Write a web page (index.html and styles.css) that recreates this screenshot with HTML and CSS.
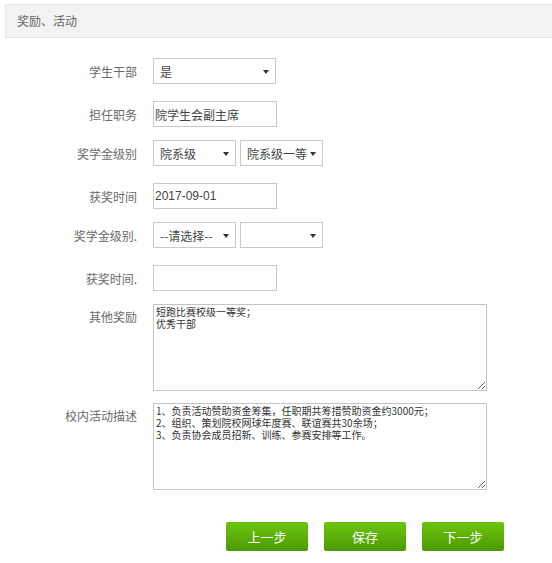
FILE: index.html
```html
<!DOCTYPE html>
<html lang="zh-CN">

<head>
    <meta charset="UTF-8">
    <meta name="viewport" content="width=device-width, initial-scale=1.0">
    <title>奖励、活动</title>
    <link rel="stylesheet" href="styles.css">
</head>

<body>

    <div class="panel-head">奖励、活动</div>

    <form class="award-form">
        <div class="row row-select">
            <label class="row-label">学生干部</label>
            <div class="select-wrap w-long">
                <select>
                    <option>是</option>
                    <option>否</option>
                </select>
            </div>
        </div>

        <div class="row">
            <label class="row-label">担任职务</label>
            <input type="text" class="text-input" value="院学生会副主席">
        </div>

        <div class="row row-select">
            <label class="row-label">奖学金级别</label>
            <div class="select-group">
                <div class="select-wrap w-short">
                    <select>
                        <option>院系级</option>
                    </select>
                </div>
                <div class="select-wrap w-short">
                    <select>
                        <option>院系级一等</option>
                    </select>
                </div>
            </div>
        </div>

        <div class="row">
            <label class="row-label">获奖时间</label>
            <input type="text" class="text-input" value="2017-09-01">
        </div>

        <div class="row row-select">
            <label class="row-label">奖学金级别.</label>
            <div class="select-group">
                <div class="select-wrap w-short">
                    <select>
                        <option>--请选择--</option>
                    </select>
                </div>
                <div class="select-wrap w-short">
                    <select>
                        <option></option>
                    </select>
                </div>
            </div>
        </div>

        <div class="row">
            <label class="row-label">获奖时间.</label>
            <input type="text" class="text-input" value="">
        </div>

        <div class="row row-area">
            <label class="row-label">其他奖励</label>
            <textarea class="text-area">短跑比赛校级一等奖；
优秀干部</textarea>
        </div>

        <div class="row row-area">
            <label class="row-label">校内活动描述</label>
            <textarea class="text-area">1、负责活动赞助资金筹集，任职期共筹措赞助资金约3000元；
2、组织、策划院校网球年度赛、联谊赛共30余场；
3、负责协会成员招新、训练、参赛安排等工作。</textarea>
        </div>

        <div class="actions">
            <button type="button" class="green-btn">上一步</button>
            <button type="button" class="green-btn">保存</button>
            <button type="button" class="green-btn">下一步</button>
        </div>
    </form>

</body>

</html>
```

FILE: styles.css
```css
body {
    margin: 0;
    font-family: "Noto Sans CJK SC", "Liberation Sans", sans-serif;
    font-size: 12px;
    color: #333;
    background: #fff;
}

.panel-head {
    margin: 4px 0 0 5px;
    height: 32px;
    line-height: 32px;
    padding-left: 11px;
    background: #f3f3f3;
    border: 1px solid #e6e6e6;
    border-right: none;
    color: #666;
    font-size: 12px;
}

.award-form {
    padding-top: 20px;
}

.row {
    display: grid;
    grid-template-columns: 137px auto;
    column-gap: 16px;
    align-items: center;
    margin-bottom: 13px;
}

.row-select {
    margin-bottom: 17px;
}

.row-area {
    align-items: start;
    margin-bottom: 12px;
}

.row-label {
    text-align: right;
    color: #6a6a6a;
    font-size: 12px;
}

.row-area .row-label {
    line-height: 26px;
}

.text-input {
    box-sizing: border-box;
    width: 124px;
    height: 26px;
    padding: 0 1px;
    border: 1px solid #c9c9c9;
    font-family: "Liberation Sans", "Noto Sans CJK SC", sans-serif;
    font-size: 12px;
    color: #444;
    outline: none;
}

.select-group {
    display: flex;
    gap: 4px;
}

.select-wrap {
    position: relative;
    box-sizing: border-box;
    height: 26px;
    border: 1px solid #c9c9c9;
    background: #fff;
}

.select-wrap::after {
    content: "";
    position: absolute;
    right: 6px;
    top: 11px;
    border-left: 3px solid transparent;
    border-right: 3px solid transparent;
    border-top: 4px solid #333;
}

.w-long {
    width: 123px;
}

.w-short {
    width: 83px;
}

.select-wrap select {
    appearance: none;
    -webkit-appearance: none;
    width: 100%;
    height: 100%;
    border: none;
    background: transparent;
    padding: 0 0 0 6px;
    font-family: "Noto Sans CJK SC", "Liberation Sans", sans-serif;
    font-size: 12px;
    color: #444;
    outline: none;
}

.text-area {
    box-sizing: border-box;
    width: 334px;
    height: 87px;
    padding: 1px 2px;
    border: 1px solid #c4c4c4;
    font-family: "Noto Sans CJK SC", "Liberation Sans", sans-serif;
    font-size: 10px;
    line-height: 12px;
    color: #333;
    outline: none;
}

.actions {
    display: flex;
    gap: 16px;
    margin: 32px 0 0 226px;
}

.green-btn {
    width: 82px;
    height: 29px;
    border: none;
    border-radius: 2px;
    background: linear-gradient(#6cc60c, #4c9a04);
    color: #fff;
    font-family: "Noto Sans CJK SC", sans-serif;
    font-size: 13px;
    cursor: pointer;
}

.green-btn:hover {
    background: #4c9a04;
}
```
